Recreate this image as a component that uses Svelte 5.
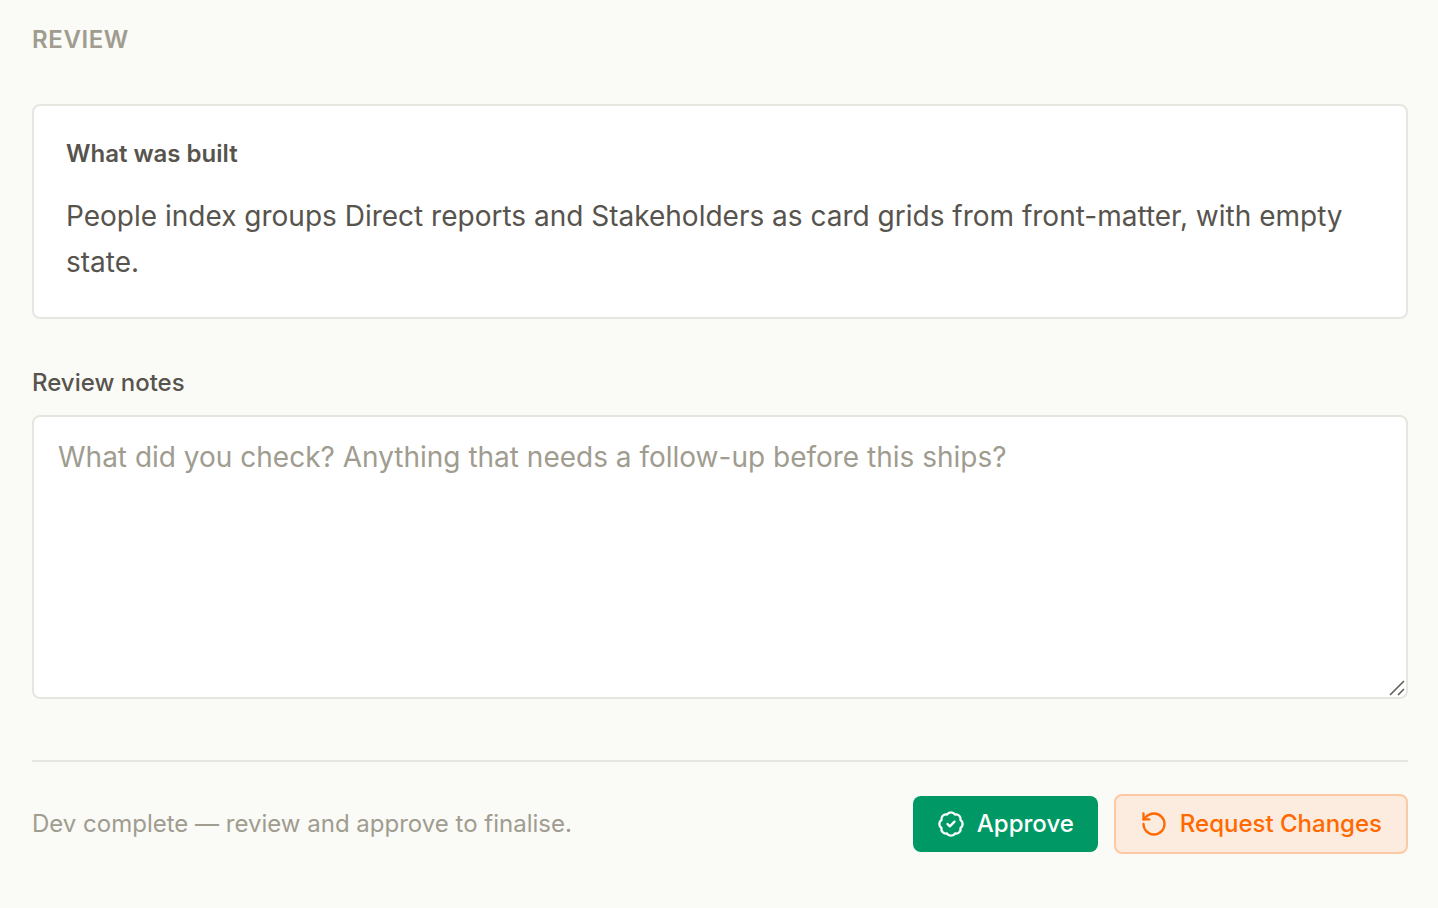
<script lang="ts">
    let notes = '';

    const summary = 'People index groups Direct reports and Stakeholders as card grids from front-matter, with empty state.';
</script>

<section class="review">
    <h2 class="heading">Review</h2>

    <div class="card">
        <h3 class="card-title">What was built</h3>
        <p class="card-text">{summary}</p>
    </div>

    <div class="field">
        <label for="review-notes">Review notes</label>
        <div class="notes-wrapper">
            <textarea
                id="review-notes"
                bind:value={notes}
                placeholder="What did you check? Anything that needs a follow-up before this ships?"
            ></textarea>
            <svg class="grip" viewBox="0 0 16 16" aria-hidden="true">
                <path d="M1 15 15 1M9 15l6-6" />
            </svg>
        </div>
    </div>

    <footer class="footer">
        <p class="status">Dev complete — review and approve to finalise.</p>
        <div class="actions">
            <button type="button" class="button approve">
                <svg class="icon" viewBox="0 0 24 24" aria-hidden="true">
                    <path d="M3.85 8.62a4 4 0 0 1 4.78-4.77 4 4 0 0 1 6.74 0 4 4 0 0 1 4.78 4.78 4 4 0 0 1 0 6.74 4 4 0 0 1-4.77 4.78 4 4 0 0 1-6.75 0 4 4 0 0 1-4.78-4.77 4 4 0 0 1 0-6.76Z" />
                    <path d="m9 12 2 2 4-4" />
                </svg>
                Approve
            </button>
            <button type="button" class="button request">
                <svg class="icon" viewBox="0 0 24 24" aria-hidden="true">
                    <path d="M3 12a9 9 0 1 0 9-9 9.75 9.75 0 0 0-6.74 2.74L3 8" />
                    <path d="M3 3v5h5" />
                </svg>
                Request Changes
            </button>
        </div>
    </footer>
</section>

<style>
    :global(body) {
        background: #fafaf6;
    }

    .review {
        padding: 24px 30px 54px 32px;
        font-family: Inter, sans-serif;
        font-size: 24px;
        line-height: 32px;
        color: #57534d;
    }

    .heading,
    .card-title,
    .card-text,
    .status {
        margin: 0;
    }

    .heading {
        font-size: 24px;
        font-weight: 600;
        letter-spacing: 0.025em;
        text-transform: uppercase;
        color: #a09c90;
    }

    .card {
        margin-top: 48px;
        padding: 32px;
        border: 2px solid #e6e6e1;
        border-radius: 8px;
        background: #ffffff;
    }

    .card-title {
        font-size: 24px;
        font-weight: 600;
    }

    .card-text {
        margin-top: 23px;
        font-size: 28px;
        line-height: 46px;
    }

    .field {
        display: flex;
        flex-direction: column;
        gap: 16px;
        margin-top: 48px;
    }

    .field label {
        font-weight: 500;
    }

    .notes-wrapper {
        position: relative;
        display: flex;
    }

    textarea {
        box-sizing: border-box;
        width: 100%;
        height: 284px;
        padding: 20px 24px;
        border: 2px solid #e6e6e1;
        border-radius: 8px;
        background: #ffffff;
        color: inherit;
        font: inherit;
        font-size: 28px;
        line-height: 40px;
        resize: none;
    }

    textarea::placeholder {
        color: #a09c90;
        opacity: 1;
    }

    .grip {
        position: absolute;
        right: 3px;
        bottom: 3px;
        width: 16px;
        height: 16px;
        fill: none;
        stroke: #5f5f5c;
        stroke-width: 1.6;
        pointer-events: none;
    }

    .footer {
        display: flex;
        align-items: center;
        justify-content: space-between;
        margin-top: 61px;
        padding-top: 32px;
        border-top: 2px solid #e6e6e1;
    }

    .status {
        color: #a09c90;
    }

    .actions {
        display: flex;
        align-items: center;
        gap: 16px;
    }

    .button {
        display: flex;
        align-items: center;
        gap: 12px;
        padding: 12px 24px;
        border: none;
        border-radius: 8px;
        font: inherit;
        font-weight: 500;
        line-height: 32px;
        cursor: pointer;
    }

    .approve {
        background: #009966;
        color: #ffffff;
    }

    .request {
        border: 2px solid #fdc9a3;
        background: #fcebdf;
        color: #ff6900;
    }

    .icon {
        width: 28px;
        height: 28px;
        fill: none;
        stroke: currentColor;
        stroke-width: 2;
        stroke-linecap: round;
        stroke-linejoin: round;
    }
</style>
